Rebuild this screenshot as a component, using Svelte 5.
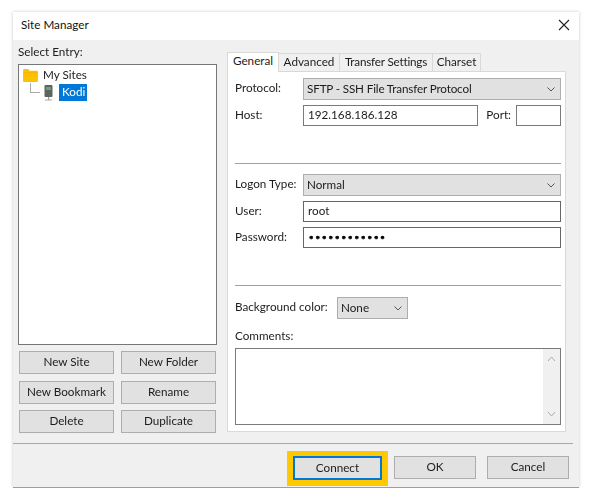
<script>
	const siteButtons = ['New Site', 'New Folder', 'New Bookmark', 'Rename', 'Delete', 'Duplicate'];
	const tabs = ['General', 'Advanced', 'Transfer Settings', 'Charset'];
</script>

{#snippet chevron()}
	<svg class="chevron" width="8" height="5" viewBox="0 0 8 5">
		<path d="M.5.5L4 4 7.500.5" fill="none" stroke="#555" stroke-width="1" />
	</svg>
{/snippet}

<div class="window">
	<header class="titlebar">
		<span class="title">Site Manager</span>
		<svg class="close" width="12" height="12" viewBox="0 0 12 12">
			<path d="M1 1l10 10M11 1L1 11" stroke="#222" stroke-width="1.1" />
		</svg>
	</header>

	<div class="content">
		<section class="left">
			<div class="entry-label">Select Entry:</div>
			<div class="tree">
				<div class="node">
					<svg width="15" height="13" viewBox="0 0 16 14">
						<path d="M0 1.500C0 .7.6 0 1.400 0h4l1.800 2h7.400c.8 0 1.400.6 1.400 1.400v9.200c0 .8-.6 1.400-1.400 1.400H1.400C.6 14 0 13.400 0 12.600z" fill="#fdc100" />
						<path d="M0 4h16" stroke="#f0a800" stroke-width=".6" />
					</svg>
					<span class="name root-name">My Sites</span>
				</div>
				<div class="node child">
					<span class="branch"></span>
					<svg width="9" height="16" viewBox="0 0 9 16">
						<rect x="0.5" y="0" width="8" height="12" rx="1" fill="#5c6660" />
						<rect x="2" y="2" width="5" height="3" fill="#6fa36b" />
						<rect x="4" y="12" width="1.2" height="3" fill="#9a9a9a" />
						<rect x="1" y="14.400" width="7" height="1.2" fill="#b5b5b5" />
					</svg>
					<span class="name selected">Kodi</span>
				</div>
			</div>
			<div class="site-buttons">
				{#each siteButtons as label}
					<button class="btn">{label}</button>
				{/each}
			</div>
		</section>

		<section class="right">
			<nav class="tabs">
				{#each tabs as tab, i}
					<div class="tab tab-{i}" class:active={i === 0}>{tab}</div>
				{/each}
			</nav>
			<div class="panel">
				<div class="row first">
					<span class="label">Protocol:</span>
					<div class="select grow"><span class="tight">SFTP - SSH File Transfer Protocol</span> {@render chevron()}</div>
				</div>
				<div class="row host">
					<span class="label">Host:</span>
					<input class="input grow" value="192.168.186.128" />
					<span class="port-label">Port:</span>
					<input class="input port" />
				</div>
				<hr class="sep sep-top" />
				<div class="row logon">
					<span class="label">Logon Type:</span>
					<div class="select grow">Normal {@render chevron()}</div>
				</div>
				<div class="row user">
					<span class="label">User:</span>
					<input class="input grow strong" value="root" />
				</div>
				<div class="row pass">
					<span class="label">Password:</span>
					<input class="input grow strong secret" type="password" value="kodikodikodi" />
				</div>
				<hr class="sep sep-bottom" />
				<div class="row bg">
					<span class="bg-label">Background color:</span>
					<div class="select bg-select">None {@render chevron()}</div>
				</div>
				<div class="comments-label">Comments:</div>
				<div class="comments">
					<div class="scrollbar">
						<svg width="9" height="6" viewBox="0 0 9 6"><path d="M1 5l3.500-4 3.500 4" fill="none" stroke="#aaa" /></svg>
						<svg width="9" height="6" viewBox="0 0 9 6"><path d="M1 1l3.500 4 3.500-4" fill="none" stroke="#aaa" /></svg>
					</div>
				</div>
			</div>
		</section>
	</div>

	<footer class="footer">
		<div class="highlight">
			<button class="btn connect">Connect</button>
		</div>
		<button class="btn action">OK</button>
		<button class="btn action">Cancel</button>
	</footer>
</div>

<style>
	:global(body) {
		background: #fff;
	}

	.window {
		box-sizing: border-box;
		width: 566px;
		height: 476px;
		margin: 12px 0 0 13px;
		display: flex;
		flex-direction: column;
		background: #f0f0f0;
		border-bottom: 1px solid #7ba3d8;
		box-shadow: 0 0 3px rgba(0, 0, 0, 0.22);
		font: 11.7px 'Lato', sans-serif;
		color: #1c1c1c;
		filter: blur(0.3px);
	}

	.titlebar {
		box-sizing: border-box;
		height: 28px;
		flex: none;
		display: flex;
		align-items: center;
		justify-content: space-between;
		padding: 0 8px 3px 8px;
		background: #fff;
		color: #111;
	}

	.title {
		padding-bottom: 2px;
	}

	.content {
		height: 404px;
		flex: none;
		display: flex;
		box-sizing: border-box;
		padding-left: 5px;
		border-bottom: 1px solid #a8a8a8;
		margin-right: 6px;
	}

	.left {
		width: 199px;
	}

	.entry-label {
		height: 24px;
		line-height: 22px;
	}

	.tree {
		box-sizing: border-box;
		height: 281px;
		background: #fff;
		border: 1px solid #777;
		padding: 2px 0 0 4px;
	}

	.node {
		display: flex;
		align-items: center;
		height: 17px;
		gap: 2px;
	}

	.child {
		padding-left: 7px;
		gap: 4px;
	}

	.branch {
		width: 9px;
		height: 9px;
		margin-top: -9px;
		border-left: 1px solid #a9a9a9;
		border-bottom: 1px solid #a9a9a9;
	}

	.name {
		padding: 0 3px;
	}

	.root-name {
		padding-bottom: 4px;
	}

	.selected {
		margin-left: 2px;
		padding: 0 2px 2px 3px;
		background: #0078d7;
		color: #fff;
		line-height: 15px;
	}

	.site-buttons {
		display: grid;
		grid-template-columns: 95px 95px;
		grid-auto-rows: 23px;
		column-gap: 7px;
		row-gap: 6.500px;
		margin: 6px 0 0 1px;
	}

	.btn {
		box-sizing: border-box;
		padding: 0 0 3px;
		background: #e1e1e1;
		border: 1px solid #adadad;
		font: inherit;
		color: inherit;
	}

	.right {
		width: 339px;
		margin-left: 10px;
		padding-top: 11px;
	}

	.tabs {
		display: flex;
		align-items: flex-end;
		height: 20px;
	}

	.tab {
		box-sizing: border-box;
		height: 18px;
		line-height: 15px;
		text-align: center;
		background: #f0f0f0;
		border: 1px solid #d9d9d9;
		border-bottom: none;
		margin-left: -1px;
	}

	.tab-0 {
		width: 52px;
	}

	.tab-1 {
		width: 62px;
	}

	.tab-2 {
		width: 94px;
		letter-spacing: -0.2px;
	}

	.tab-3 {
		width: 49px;
	}

	.tab.active {
		height: 20px;
		line-height: 15px;
		margin-left: 0;
		background: #fff;
		position: relative;
		top: 1px;
	}

	.panel {
		box-sizing: border-box;
		height: 361px;
		background: #fff;
		border: 1px solid #d9d9d9;
		padding: 0 4px 0 7px;
	}

	.row {
		display: flex;
		align-items: center;
	}

	.first {
		margin-top: 6px;
		height: 22px;
	}

	.host {
		margin-top: 5px;
		height: 21px;
	}

	.logon {
		margin-top: 10px;
		height: 22px;
	}

	.user {
		margin-top: 5px;
		height: 21px;
	}

	.pass {
		margin-top: 5px;
		height: 21px;
	}

	.bg {
		margin-top: 11px;
		height: 22px;
	}

	.label {
		width: 68px;
		flex: none;
		padding-bottom: 4px;
	}

	.bg-label {
		width: 102px;
		flex: none;
		padding-bottom: 4px;
	}

	.grow {
		flex: 1;
		min-width: 0;
	}

	.select {
		box-sizing: border-box;
		height: 100%;
		display: flex;
		align-items: center;
		justify-content: space-between;
		padding: 0 5px 3px 3px;
		background: #e1e1e1;
		border: 1px solid #adadad;
	}

	.tight {
		letter-spacing: -0.16px;
	}

	.bg-select {
		width: 71px;
	}

	.input {
		box-sizing: border-box;
		height: 100%;
		padding: 0 4px 3px;
		background: #fff;
		border: 1px solid #7a7a7a;
		border-radius: 0;
		font: inherit;
		color: inherit;
		outline: none;
	}

	.input.strong {
		border-color: #666;
	}

	.secret {
		padding-bottom: 0;
		font: 11px 'DejaVu Sans', sans-serif;
		color: #000;
		-webkit-text-stroke: 0.5px #000;
	}

	.port-label {
		width: 38px;
		flex: none;
		text-align: right;
		padding: 0 5px 4px 0;
		box-sizing: border-box;
	}

	.port {
		width: 45px;
		flex: none;
	}

	.sep {
		margin: 0;
		border: none;
		border-top: 1px solid #a0a0a0;
	}

	.sep-top {
		margin-top: 37px;
	}

	.sep-bottom {
		margin-top: 37px;
	}

	.comments-label {
		margin-top: 10px;
		height: 19px;
		line-height: 13px;
	}

	.comments {
		box-sizing: border-box;
		height: 77px;
		display: flex;
		justify-content: flex-end;
		background: #fff;
		border: 1px solid #7a7a7a;
	}

	.scrollbar {
		width: 17px;
		display: flex;
		flex-direction: column;
		align-items: center;
		justify-content: space-between;
		padding: 7px 0;
		background: #f0f0f0;
	}

	.footer {
		flex: 1;
		display: flex;
		align-items: flex-start;
		padding: 7px 10px 0 0;
		justify-content: flex-end;
		gap: 11px;
	}

	.highlight {
		box-sizing: border-box;
		width: 101px;
		height: 35px;
		margin-right: -5px;
		background: #f0f0f0;
		border: solid #ffc800;
		border-width: 5px 6px 6px;
	}

	.connect {
		width: 100%;
		height: 100%;
		border: 2px solid #0078d7;
	}

	.action {
		width: 82px;
		height: 23px;
		margin-top: 5px;
	}

	.chevron {
		flex: none;
		margin-top: 3px;
	}

	.close {
		margin-right: 1px;
	}
</style>
